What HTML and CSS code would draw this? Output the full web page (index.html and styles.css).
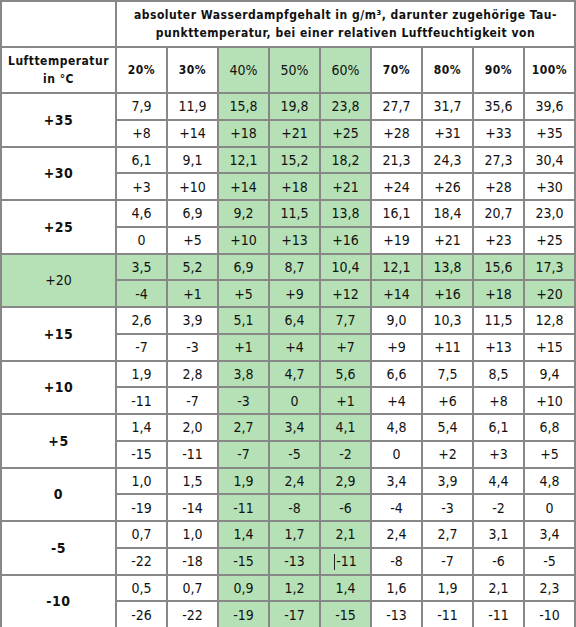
FILE: index.html
```html
<!DOCTYPE html>
<html>
    <head>
        <title>Taupunkttabelle</title>
        <link rel="stylesheet" href="styles.css">
    </head>
    <body>
        <table class="dew">
            <colgroup>
                <col class="first">
                <col><col><col><col><col><col><col><col><col>
            </colgroup>
            <tr class="head1">
                <th></th>
                <th colspan="9">absoluter Wasserdampfgehalt in g/m³, darunter zugehörige Tau-<br>punkttemperatur, bei einer relativen Luftfeuchtigkeit von</th>
            </tr>
            <tr class="head2">
                <th>Lufttemperatur<br>in °C</th>
                <th>20%</th><th>30%</th>
                <th class="g">40%</th><th class="g">50%</th><th class="g">60%</th>
                <th>70%</th><th>80%</th><th>90%</th><th>100%</th>
            </tr>

            <tr><th rowspan="2" class="temp">+35</th>
                <td>7,9</td><td>11,9</td><td class="g">15,8</td><td class="g">19,8</td><td class="g">23,8</td><td>27,7</td><td>31,7</td><td>35,6</td><td>39,6</td></tr>
            <tr><td>+8</td><td>+14</td><td class="g">+18</td><td class="g">+21</td><td class="g">+25</td><td>+28</td><td>+31</td><td>+33</td><td>+35</td></tr>

            <tr><th rowspan="2" class="temp">+30</th>
                <td>6,1</td><td>9,1</td><td class="g">12,1</td><td class="g">15,2</td><td class="g">18,2</td><td>21,3</td><td>24,3</td><td>27,3</td><td>30,4</td></tr>
            <tr><td>+3</td><td>+10</td><td class="g">+14</td><td class="g">+18</td><td class="g">+21</td><td>+24</td><td>+26</td><td>+28</td><td>+30</td></tr>

            <tr><th rowspan="2" class="temp">+25</th>
                <td>4,6</td><td>6,9</td><td class="g">9,2</td><td class="g">11,5</td><td class="g">13,8</td><td>16,1</td><td>18,4</td><td>20,7</td><td>23,0</td></tr>
            <tr><td>0</td><td>+5</td><td class="g">+10</td><td class="g">+13</td><td class="g">+16</td><td>+19</td><td>+21</td><td>+23</td><td>+25</td></tr>

            <tr class="g"><td rowspan="2" class="temp">+20</td>
                <td>3,5</td><td>5,2</td><td>6,9</td><td>8,7</td><td>10,4</td><td>12,1</td><td>13,8</td><td>15,6</td><td>17,3</td></tr>
            <tr class="g"><td>-4</td><td>+1</td><td>+5</td><td>+9</td><td>+12</td><td>+14</td><td>+16</td><td>+18</td><td>+20</td></tr>

            <tr><th rowspan="2" class="temp">+15</th>
                <td>2,6</td><td>3,9</td><td class="g">5,1</td><td class="g">6,4</td><td class="g">7,7</td><td>9,0</td><td>10,3</td><td>11,5</td><td>12,8</td></tr>
            <tr><td>-7</td><td>-3</td><td class="g">+1</td><td class="g">+4</td><td class="g">+7</td><td>+9</td><td>+11</td><td>+13</td><td>+15</td></tr>

            <tr><th rowspan="2" class="temp">+10</th>
                <td>1,9</td><td>2,8</td><td class="g">3,8</td><td class="g">4,7</td><td class="g">5,6</td><td>6,6</td><td>7,5</td><td>8,5</td><td>9,4</td></tr>
            <tr><td>-11</td><td>-7</td><td class="g">-3</td><td class="g">0</td><td class="g">+1</td><td>+4</td><td>+6</td><td>+8</td><td>+10</td></tr>

            <tr><th rowspan="2" class="temp">+5</th>
                <td>1,4</td><td>2,0</td><td class="g">2,7</td><td class="g">3,4</td><td class="g">4,1</td><td>4,8</td><td>5,4</td><td>6,1</td><td>6,8</td></tr>
            <tr><td>-15</td><td>-11</td><td class="g">-7</td><td class="g">-5</td><td class="g">-2</td><td>0</td><td>+2</td><td>+3</td><td>+5</td></tr>

            <tr><th rowspan="2" class="temp">0</th>
                <td>1,0</td><td>1,5</td><td class="g">1,9</td><td class="g">2,4</td><td class="g">2,9</td><td>3,4</td><td>3,9</td><td>4,4</td><td>4,8</td></tr>
            <tr><td>-19</td><td>-14</td><td class="g">-11</td><td class="g">-8</td><td class="g">-6</td><td>-4</td><td>-3</td><td>-2</td><td>0</td></tr>

            <tr><th rowspan="2" class="temp">-5</th>
                <td>0,7</td><td>1,0</td><td class="g">1,4</td><td class="g">1,7</td><td class="g">2,1</td><td>2,4</td><td>2,7</td><td>3,1</td><td>3,4</td></tr>
            <tr><td>-22</td><td>-18</td><td class="g">-15</td><td class="g">-13</td><td class="g"><span class="caret"></span>-11</td><td>-8</td><td>-7</td><td>-6</td><td>-5</td></tr>

            <tr><th rowspan="2" class="temp">-10</th>
                <td>0,5</td><td>0,7</td><td class="g">0,9</td><td class="g">1,2</td><td class="g">1,4</td><td>1,6</td><td>1,9</td><td>2,1</td><td>2,3</td></tr>
            <tr><td>-26</td><td>-22</td><td class="g">-19</td><td class="g">-17</td><td class="g">-15</td><td>-13</td><td>-11</td><td>-11</td><td>-10</td></tr>
        </table>
    </body>
</html>
```

FILE: styles.css
```css
body{
    margin: 0;
    background: white;
}
.dew{
    border-collapse: collapse;
    table-layout: fixed;
    width: 576px;
    border: 2px solid #878787;
    font-family: "DejaVu Sans Condensed", "DejaVu Sans", sans-serif;
    color: #111;
}
.dew col.first{
    width: 115px;
}
.dew th, .dew td{
    border: 2px solid #878787;
    padding: 0;
    text-align: center;
    vertical-align: middle;
}
.dew th{
    font-family: "DejaVu Sans Condensed", "DejaVu Sans", sans-serif;
    font-weight: bold;
    font-size: 12px;
    line-height: 18px;
    letter-spacing: 0.5px;
}
.dew td{
    font-size: 14px;
    height: 24.75px;
}
.head1 th{
    height: 44px;
}
.head2 th{
    height: 44px;
}
.head2 th.g{
    font-weight: normal;
    font-size: 14px;
    letter-spacing: 0;
}
.dew th.temp{
    font-size: 14px;
}
.g, tr.g td{
    background-color: #b6e1b6;
}
.dew td.temp{
    font-size: 14px;
}
.caret{
    display: inline-block;
    width: 1px;
    height: 16px;
    background: #222;
    vertical-align: middle;
    margin-right: 1px;
}
```
